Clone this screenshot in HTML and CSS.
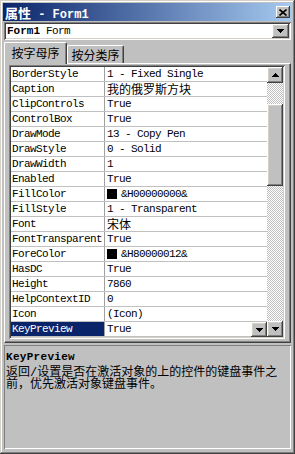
FILE: index.html
```html
<!DOCTYPE html>
<html lang="zh">
    <head>
        <meta charset="utf-8">
        <title>属性 - Form1</title>
        <link rel="stylesheet" href="styles.css">
    </head>
    <body>
        <div class="window">
            <div class="titlebar">
                <span class="title"><span class="cjk">属性</span> - Form1</span>
                <span class="close">
                    <svg width="8" height="7" viewBox="0 0 8 7"><path d="M0.5 0.5L7.5 6.5M7.5 0.5L0.5 6.5" stroke="#000" stroke-width="1.6"/></svg>
                </span>
            </div>

            <div class="objbox">
                <span class="objtext"><b>Form1</b> Form</span>
                <span class="btn dropbtn">
                    <svg width="7" height="4" viewBox="0 0 7 4" shape-rendering="crispEdges"><path d="M0 0h7v1h-1v1h-1v1h-1v1h-1v-1h-1v-1h-1v-1h-1z"/></svg>
                </span>
            </div>

            <div class="tabs">
                <div class="tab active">按字母序</div>
                <div class="tab">按分类序</div>
            </div>

            <div class="tabpanel">
                <div class="grid">
                    <div class="rows">
                        <div class="row"><div class="name">BorderStyle</div><div class="value">1 - Fixed Single</div></div>
                        <div class="row"><div class="name">Caption</div><div class="value"><span class="cjk">我的俄罗斯方块</span></div></div>
                        <div class="row"><div class="name">ClipControls</div><div class="value">True</div></div>
                        <div class="row"><div class="name">ControlBox</div><div class="value">True</div></div>
                        <div class="row"><div class="name">DrawMode</div><div class="value">13 - Copy Pen</div></div>
                        <div class="row"><div class="name">DrawStyle</div><div class="value">0 - Solid</div></div>
                        <div class="row"><div class="name">DrawWidth</div><div class="value">1</div></div>
                        <div class="row"><div class="name">Enabled</div><div class="value">True</div></div>
                        <div class="row"><div class="name">FillColor</div><div class="value"><span class="swatch"></span>&amp;H00000000&amp;</div></div>
                        <div class="row"><div class="name">FillStyle</div><div class="value">1 - Transparent</div></div>
                        <div class="row"><div class="name">Font</div><div class="value"><span class="cjk">宋体</span></div></div>
                        <div class="row"><div class="name">FontTransparent</div><div class="value">True</div></div>
                        <div class="row"><div class="name">ForeColor</div><div class="value"><span class="swatch"></span>&amp;H80000012&amp;</div></div>
                        <div class="row"><div class="name">HasDC</div><div class="value">True</div></div>
                        <div class="row"><div class="name">Height</div><div class="value">7860</div></div>
                        <div class="row"><div class="name">HelpContextID</div><div class="value">0</div></div>
                        <div class="row"><div class="name">Icon</div><div class="value">(Icon)</div></div>
                        <div class="row selected">
                            <div class="name">KeyPreview</div>
                            <div class="value">True
                                <span class="btn cellbtn">
                                    <svg width="7" height="4" viewBox="0 0 7 4" shape-rendering="crispEdges"><path d="M0 0h7v1h-1v1h-1v1h-1v1h-1v-1h-1v-1h-1v-1h-1z"/></svg>
                                </span>
                            </div>
                        </div>
                    </div>

                    <div class="scrollbar">
                        <span class="btn sb-btn">
                            <svg width="7" height="4" viewBox="0 0 7 4" shape-rendering="crispEdges"><path d="M0 4h7v-1h-1v-1h-1v-1h-1v-1h-1v1h-1v1h-1v1h-1z"/></svg>
                        </span>
                        <span class="sb-gap"></span>
                        <span class="btn sb-thumb"></span>
                        <span class="sb-rest"></span>
                        <span class="btn sb-btn">
                            <svg width="7" height="4" viewBox="0 0 7 4" shape-rendering="crispEdges"><path d="M0 0h7v1h-1v1h-1v1h-1v1h-1v-1h-1v-1h-1v-1h-1z"/></svg>
                        </span>
                    </div>
                </div>
            </div>

            <div class="desc">
                <div class="desc-title">KeyPreview</div>
                <div class="desc-text">返回/设置是否在激活对象的上的控件的键盘事件之前，优先激活对象键盘事件。</div>
            </div>
        </div>
    </body>
</html>
```

FILE: styles.css
```css
html, body {
    margin: 0;
}

body {
    background-color: #C0C0C0;
    color: #000000;
    font-family: "Liberation Mono", "Noto Sans CJK SC", monospace;
    font-size: 11px;
}

.cjk {
    font-family: "Noto Sans CJK SC", sans-serif;
    font-size: 12px;
    letter-spacing: 0;
}

/* window frame */
.window {
    width: 295px;
    height: 454px;
    box-sizing: border-box;
    padding: 3px 4px 5px;
    display: flex;
    flex-direction: column;
    background-color: #C0C0C0;
    box-shadow: inset -1px -1px #404040, inset 1px 1px #D4D0C8,
                inset -2px -2px #808080, inset 2px 2px #FFFFFF;
}

/* raised classic button */
.btn {
    display: flex;
    align-items: center;
    justify-content: center;
    box-sizing: border-box;
    background-color: #C0C0C0;
    box-shadow: inset -1px -1px #404040, inset 1px 1px #FFFFFF,
                inset -2px -2px #808080, inset 2px 2px #D4D0C8;
}

.titlebar {
    height: 18px;
    margin: 0 -1px;
    padding-left: 2px;
    display: flex;
    align-items: center;
    background: linear-gradient(to right, #0A246A, #A6CAF0);
    color: #FFFFFF;
}

.title {
    font-weight: bold;
    font-size: 12px;
    white-space: pre;
}

.title .cjk {
    font-size: 13px;
    font-weight: bold;
}

.close {
    margin-left: auto;
    margin-right: 2px;
    width: 14px;
    height: 12px;
    display: flex;
    align-items: center;
    justify-content: center;
    box-sizing: border-box;
    background-color: #C0C0C0;
    box-shadow: inset -1px -1px #404040, inset 1px 1px #FFFFFF,
                inset -2px -2px #808080;
}

/* object combo */
.objbox {
    margin-top: 1px;
    height: 18px;
    box-sizing: border-box;
    padding: 2px;
    display: flex;
    align-items: center;
    background-color: #FFFFFF;
    box-shadow: inset 1px 1px #808080, inset -1px -1px #FFFFFF,
                inset 2px 2px #404040, inset -2px -2px #D4D0C8;
}

.objtext {
    padding-left: 1px;
    letter-spacing: -0.6px;
    white-space: pre;
}

.objtext b {
    letter-spacing: 0;
}

.dropbtn {
    margin-left: auto;
    width: 17px;
    height: 14px;
}

/* tabs */
.tabs {
    margin-top: 1px;
    height: 22px;
    display: flex;
    align-items: flex-end;
}

.tab {
    position: relative;
    z-index: 1;
    width: 57px;
    height: 18px;
    box-sizing: border-box;
    border-top: 1px solid #FFFFFF;
    border-left: 1px solid #FFFFFF;
    border-right: 1px solid #404040;
    border-radius: 2px 2px 0 0;
    box-shadow: inset -1px 0 #808080;
    font-family: "Noto Sans CJK SC", sans-serif;
    font-size: 12px;
    line-height: 17px;
    text-align: center;
    background-color: #C0C0C0;
}

.tab.active {
    width: 63px;
    height: 22px;
    margin-bottom: -1px;
    line-height: 20px;
}

.tabpanel {
    height: 280px;
    box-sizing: border-box;
    padding: 1px 5px 3px 4px;
    border-top: 1px solid #FFFFFF;
    border-left: 1px solid #FFFFFF;
    border-right: 1px solid #404040;
    border-bottom: 1px solid #404040;
    box-shadow: inset -1px -1px #808080;
}

/* property grid */
.grid {
    display: flex;
    padding: 2px;
    box-shadow: inset 1px 1px #808080, inset -1px -1px #FFFFFF,
                inset 2px 2px #404040, inset -2px -2px #D4D0C8;
}

.rows {
    flex: 1;
    background-color: #FFFFFF;
}

.row {
    display: flex;
    height: 15px;
    box-sizing: border-box;
    border-bottom: 1px solid #C0C0C0;
    line-height: 14px;
    letter-spacing: -0.6px;
    white-space: nowrap;
}

.name {
    width: 94px;
    box-sizing: border-box;
    padding-left: 1px;
    border-right: 1px solid #A0A0A0;
    overflow: hidden;
}

.value {
    flex: 1;
    padding-left: 2px;
    display: flex;
    align-items: center;
}

.row.selected .name {
    background-color: #0A246A;
    color: #FFFFFF;
}

.swatch {
    width: 10px;
    height: 10px;
    margin-right: 4px;
    background-color: #000000;
}

.cellbtn {
    margin-left: auto;
    width: 16px;
    height: 15px;
    margin-bottom: -1px;
}

.scrollbar {
    width: 16px;
    display: flex;
    flex-direction: column;
    background: repeating-conic-gradient(#FFFFFF 0 25%, #C0C0C0 0 50%) 0 0 / 2px 2px;
}

.sb-btn {
    height: 16px;
}

.sb-gap {
    height: 21px;
}

.sb-thumb {
    height: 82px;
}

.sb-rest {
    flex: 1;
}

/* description pane */
.desc {
    flex: 1;
    margin-top: 2px;
    padding: 6px 2px 0;
    box-shadow: inset 1px 1px #808080, inset -1px -1px #FFFFFF;
}

.desc-title {
    font-weight: bold;
    line-height: 13px;
    letter-spacing: 0.3px;
}

.desc-text {
    width: 276px;
    margin-top: 3px;
    font-size: 12px;
    line-height: 12px;
}
```
